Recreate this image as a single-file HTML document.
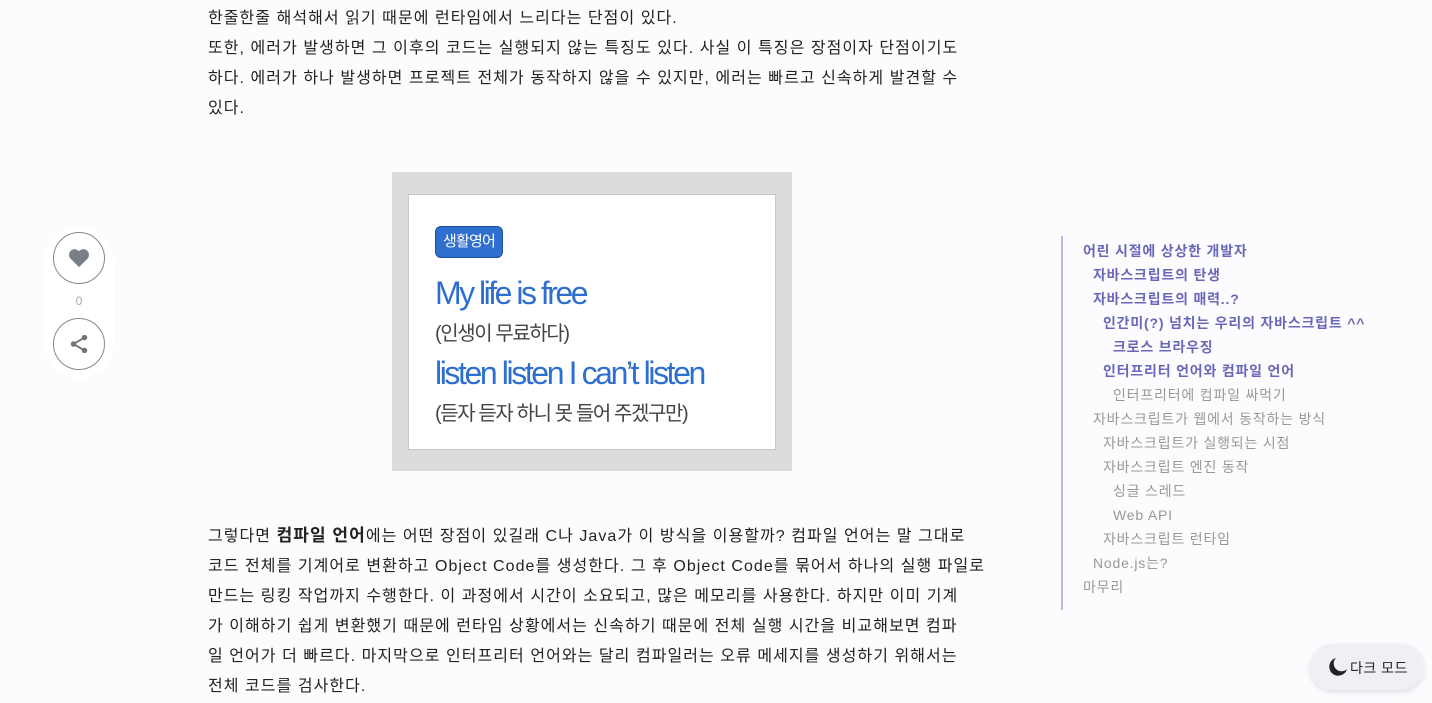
<!DOCTYPE html>
<html><head><meta charset="utf-8"><style>
body{margin:0;width:1432px;height:703px;background:#fcfcff;font-family:"Liberation Sans","Noto Sans CJK KR",sans-serif;position:relative;overflow:hidden;color:#222}
.p{position:absolute;left:208px;width:800px;font-size:16px;line-height:30px;letter-spacing:1.05px;white-space:nowrap}
.img{position:absolute;left:392px;top:172px;width:400px;height:299px;background:#dcdcdc}
.in{position:absolute;left:16px;top:22px;width:366px;height:254px;background:#fff;border:1px solid #c8c8c8}
.toc{position:absolute;left:1061px;top:236px;height:374px;border-left:2px solid #b8b8e8;font-size:14px;letter-spacing:0.8px}
.toc div{position:absolute;white-space:nowrap;line-height:24px}
.b{color:#6868b8;font-weight:bold}.g{color:#999}
.circ{position:absolute;left:53px;width:50px;height:50px;border:1px solid #888;border-radius:50%;background:#fff;display:flex;align-items:center;justify-content:center}
</style></head><body>
<div class="p" style="top:4px">한줄한줄 해석해서 읽기 때문에 런타임에서 느리다는 단점이 있다.<br>또한, 에러가 발생하면 그 이후의 코드는 실행되지 않는 특징도 있다. 사실 이 특징은 장점이자 단점이기도<br>하다. 에러가 하나 발생하면 프로젝트 전체가 동작하지 않을 수 있지만, 에러는 빠르고 신속하게 발견할 수<br>있다.</div>
<div class="img"><div class="in">
<div style="position:absolute;left:26px;top:31px;background:#2f6fcf;color:#fff;border-radius:6px;padding:1px 7px;font-size:15px;letter-spacing:-0.8px;line-height:28px;border:1px solid #1d4f9f">생활영어</div>
<div style="position:absolute;left:26px;top:80px;color:#2d6fd0;font-size:32px;letter-spacing:-2.5px">My life is free</div>
<div style="position:absolute;left:26px;top:122px;color:#444;font-size:20px;letter-spacing:-1.4px">(인생이 무료하다)</div>
<div style="position:absolute;left:26px;top:160px;color:#2d6fd0;font-size:32px;letter-spacing:-2.4px">listen listen I can’t listen</div>
<div style="position:absolute;left:26px;top:202px;color:#444;font-size:20px;letter-spacing:-1.4px">(듣자 듣자 하니 못 들어 주겠구만)</div>
</div></div>
<div class="p" style="top:521px">그렇다면 <b style="font-size:17px">컴파일 언어</b>에는 어떤 장점이 있길래 C나 Java가 이 방식을 이용할까? 컴파일 언어는 말 그대로<br>코드 전체를 기계어로 변환하고 Object Code를 생성한다. 그 후 Object Code를 묶어서 하나의 실행 파일로<br>만드는 링킹 작업까지 수행한다. 이 과정에서 시간이 소요되고, 많은 메모리를 사용한다. 하지만 이미 기계<br>가 이해하기 쉽게 변환했기 때문에 런타임 상황에서는 신속하기 때문에 전체 실행 시간을 비교해보면 컴파<br>일 언어가 더 빠르다. 마지막으로 인터프리터 언어와는 달리 컴파일러는 오류 메세지를 생성하기 위해서는<br>전체 코드를 검사한다.</div>
<div style="position:absolute;left:44px;top:226px;width:70px;height:152px;background:#fff;border-radius:35px"></div>
<div class="circ" style="top:232px"><svg width="22" height="20" viewBox="0 0 24 22"><path d="M12 21L2.5 11.5A5.8 5.8 0 0 1 12 3.5a5.8 5.8 0 0 1 9.5 8z" fill="#7a7f86"/></svg></div>
<div style="position:absolute;left:53px;width:52px;top:294px;text-align:center;font-size:12px;color:#aaa">0</div>
<div class="circ" style="top:318px"><svg width="22" height="22" viewBox="0 0 24 24"><circle cx="18" cy="5" r="3" fill="#6f747b"/><circle cx="6" cy="12" r="3" fill="#6f747b"/><circle cx="18" cy="19" r="3" fill="#6f747b"/><path d="M18 5L6 12L18 19" stroke="#6f747b" stroke-width="2" fill="none"/></svg></div>
<div class="toc">
<div class="b" style="left:20px;top:3px">어린 시절에 상상한 개발자</div>
<div class="b" style="left:30px;top:27px">자바스크립트의 탄생</div>
<div class="b" style="left:30px;top:51px">자바스크립트의 매력..?</div>
<div class="b" style="left:40px;top:75px">인간미(?) 넘치는 우리의 자바스크립트 ^^</div>
<div class="b" style="left:50px;top:99px">크로스 브라우징</div>
<div class="b" style="left:40px;top:123px">인터프리터 언어와 컴파일 언어</div>
<div class="g" style="left:50px;top:147px">인터프리터에 컴파일 싸먹기</div>
<div class="g" style="left:30px;top:171px">자바스크립트가 웹에서 동작하는 방식</div>
<div class="g" style="left:40px;top:195px">자바스크립트가 실행되는 시점</div>
<div class="g" style="left:40px;top:219px">자바스크립트 엔진 동작</div>
<div class="g" style="left:50px;top:243px">싱글 스레드</div>
<div class="g" style="left:50px;top:267px">Web API</div>
<div class="g" style="left:40px;top:291px">자바스크립트 런타임</div>
<div class="g" style="left:30px;top:315px">Node.js는?</div>
<div class="g" style="left:20px;top:339px">마무리</div>
</div>
<div style="position:absolute;left:1310px;top:644px;width:114px;height:46px;border-radius:23px;background:#f0eff4;box-shadow:0 2px 6px rgba(0,0,0,.12);font-size:14px;color:#222">
<svg style="position:absolute;left:18px;top:13px" width="20" height="20" viewBox="0 0 20 20"><path d="M8 1A9 9 0 1 0 19 12A7 7 0 0 1 8 1z" fill="#222"/></svg>
<span style="position:absolute;left:40px;top:14px;letter-spacing:0.5px">다크 모드</span></div>
</body></html>
